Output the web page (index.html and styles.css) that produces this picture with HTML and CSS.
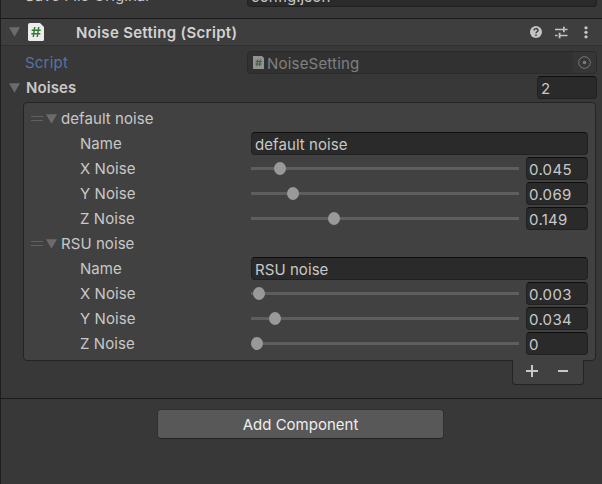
FILE: index.html
```html
<!DOCTYPE html>
<html lang="en">
<head>
<meta charset="utf-8">
<title>Inspector</title>
<link rel="stylesheet" href="styles.css">
</head>
<body>
<main class="inspector">
  <section class="previous">
    <div class="row prop"><span class="label">Save File Original</span><div class="field wide">config.json</div></div>
  </section>

  <header class="header">
    <svg class="arrow" viewBox="0 0 11 10"><path d="M0 .3h11L5.5 9.700z"/></svg>
    <svg class="script-icon" viewBox="0 0 16 18"><path class="page" d="M2 0h10l4 4v12.500a1.500 1.500 0 0 1-1.500 1.500h-13A1.500 1.500 0 0 1 0 16.500V2a2 2 0 0 1 2-2z"/><path class="hash" d="M6.700 4 5.300 14M10.700 4 9.300 14M3.700 7.200h9M3.300 10.800h9"/></svg>
    <h1 class="title">Noise Setting (Script)</h1>
    <div class="tools">
      <svg class="help" viewBox="0 0 12 12"><circle cx="6" cy="6" r="6"/><path d="M4 4.600c0-2.600 4-2.600 4-.2C8 5.800 6 5.700 6 7.300M6 8.600v1.500"/></svg>
      <svg class="preset" viewBox="0 0 13 13"><path d="M0 3.500h8M10 3.500h2.500M0 9.500h2.500M5 9.500h7.500"/><path class="stop" d="M8.900.7v5.600M4.600 6.700v5.600"/></svg>
      <svg class="more" viewBox="0 0 4 13"><circle cx="2" cy="1.800" r="1.650"/><circle cx="2" cy="6.300" r="1.650"/><circle cx="2" cy="10.800" r="1.650"/></svg>
    </div>
  </header>

  <section class="component">
    <div class="row prop">
      <span class="label link">Script</span>
      <div class="field wide object">
        <svg class="mini-icon" viewBox="0 0 11 13"><path class="page" d="M0 0h9l2 2v11H0z"/><path class="hash" d="M4.600 3.500 3.800 10M7.300 3.500 6.500 10M2.500 5.500h6.300M2.300 8h6.300"/></svg>
        <span class="object-name">NoiseSetting</span>
        <span class="picker"><svg viewBox="0 0 13 13"><circle class="ring" cx="6.500" cy="6.500" r="5.800"/><circle class="dot" cx="6.500" cy="6.500" r="1.800"/></svg></span>
      </div>
    </div>
    <div class="row noises">
      <svg class="arrow" viewBox="0 0 11 10"><path d="M0 .3h11L5.5 9.700z"/></svg>
      <span class="label strong">Noises</span>
      <div class="field count">2</div>
    </div>

    <div class="list">
      <div class="row item"><i class="handle"></i><svg class="arrow" viewBox="0 0 11 10"><path d="M0 .3h11L5.5 9.700z"/></svg><span>default noise</span></div>
      <div class="row entry"><span class="label">Name</span><div class="field name">default noise</div></div>
      <div class="row entry"><span class="label">X Noise</span><div class="slider"><i class="knob" style="margin-left:23px"></i></div><div class="field value">0.045</div></div>
      <div class="row entry"><span class="label">Y Noise</span><div class="slider"><i class="knob" style="margin-left:36px"></i></div><div class="field value">0.069</div></div>
      <div class="row entry"><span class="label">Z Noise</span><div class="slider"><i class="knob" style="margin-left:77px"></i></div><div class="field value">0.149</div></div>
      <div class="row item"><i class="handle"></i><svg class="arrow" viewBox="0 0 11 10"><path d="M0 .3h11L5.5 9.700z"/></svg><span>RSU noise</span></div>
      <div class="row entry"><span class="label">Name</span><div class="field name">RSU noise</div></div>
      <div class="row entry"><span class="label">X Noise</span><div class="slider"><i class="knob" style="margin-left:2px"></i></div><div class="field value">0.003</div></div>
      <div class="row entry"><span class="label">Y Noise</span><div class="slider"><i class="knob" style="margin-left:18px"></i></div><div class="field value">0.034</div></div>
      <div class="row entry"><span class="label">Z Noise</span><div class="slider"><i class="knob" style="margin-left:0px"></i></div><div class="field value">0</div></div>
    </div>
    <div class="list-footer">
      <svg viewBox="0 0 12 12"><path d="M0 6h12M6 0v12"/></svg>
      <svg viewBox="0 0 12 12"><path d="M1 6h10"/></svg>
    </div>
  </section>

  <footer class="actions"><button class="add">Add Component</button></footer>
</main>
</body>
</html>
```

FILE: styles.css
```css
* { box-sizing: border-box; }

body {
  margin: 0;
  background: #383838;
  color: #c8c8c8;
  font: 15px/25px Inter, sans-serif;
  letter-spacing: 0.07px;
  overflow: hidden;
}

.inspector {
  display: flex;
  flex-direction: column;
  height: 484px;
  border-left: 1px solid #1e1e1e;
}

svg { display: block; flex: none; }
.row { display: flex; align-items: center; height: 25px; white-space: nowrap; }
.label { flex: none; }

.previous {
  display: flex;
  flex-direction: column;
  justify-content: flex-end;
  height: 19px;
  flex: none;
  padding-bottom: 10px;
  border-bottom: 1px solid #1a1a1a;
}
.previous .row { flex: none; }

.prop { padding: 0 5px 0 24px; }
.prop .label { width: 222px; }

.field {
  flex: none;
  height: 23px;
  padding-left: 3px;
  background: #2a2a2a;
  border: 1px solid #212121;
  border-top-color: #0d0d0d;
  border-radius: 4px;
  line-height: 23px;
}
.wide { width: 350px; }
.count { width: 60px; margin-left: auto; }
.name { width: 337px; }
.value { width: 62px; margin-left: 7px; padding-left: 2px; letter-spacing: 0.3px; }

.arrow { width: 11px; height: 10px; fill: #6b6b6b; }

.header {
  display: flex;
  align-items: center;
  flex: none;
  height: 27px;
  padding: 0 14px 0 8px;
  background: #3e3e3e;
  border-bottom: 1px solid #303030;
}
.script-icon { width: 16px; height: 18px; margin-left: 8px; }
.page { fill: #ececec; }
.hash { fill: none; stroke: #347a38; stroke-width: 1.5; }
.title { margin: 0 0 0 32px; font-size: 15px; font-weight: 600; line-height: 25px; letter-spacing: 0.3px; color: #d2d2d2; }
.tools { display: flex; align-items: center; margin-left: auto; }
.help { width: 12px; height: 12px; fill: #c4c4c4; }
.help path { fill: none; stroke: #3e3e3e; stroke-width: 1.5; }
.preset { width: 13px; height: 13px; margin-left: 13px; fill: none; stroke: #c4c4c4; stroke-width: 1.3; }
.preset .stop { stroke-width: 1.8; }
.more { width: 4px; height: 13px; margin-left: 16px; fill: #c4c4c4; }

.component { display: flex; flex-direction: column; flex: none; height: 352px; padding-top: 4px; }
.link { color: #5573a5; letter-spacing: 0.2px; }
.object { display: flex; align-items: center; padding-left: 5px; background: #313131; border-color: #2a2a2a; color: #808080; }
.object-name { letter-spacing: 0.2px; padding-top: 1px; }
.mini-icon { width: 11px; height: 13px; margin-right: 3px; }
.mini-icon .page { fill: #929292; }
.mini-icon .hash { stroke: #3e6040; stroke-width: 1.2; }
.picker { display: flex; align-items: center; justify-content: center; width: 23px; height: 21px; margin-left: auto; background: #363636; border-radius: 0 3px 3px 0; }
.picker svg { width: 13px; height: 13px; }
.ring { fill: none; stroke: #7b7b7b; }
.dot { fill: #7b7b7b; }
.noises { padding: 0 5px 0 8px; }
.strong { margin-left: 6px; font-weight: 600; letter-spacing: 0.1px; }

.list {
  flex: none;
  height: 259px;
  margin: 2px 6px 0 22px;
  padding-top: 3px;
  background: #414141;
  border: 1px solid #242424;
  border-radius: 4px;
}
.item { padding-left: 7px; }
.handle { width: 12px; height: 5px; margin-right: 3px; border: solid #606060; border-width: 1px 0; }
.item span { margin-left: 4px; }
.entry { padding-left: 56px; }
.entry .label { width: 171px; }
.slider { display: flex; align-items: center; width: 268px; height: 13px; background: linear-gradient(#5e5e5e, #5e5e5e) center / 100% 3px no-repeat; }
.knob { width: 12px; height: 13px; border-radius: 50%; background: #999; }

.list-footer {
  display: flex;
  align-items: center;
  justify-content: space-between;
  align-self: flex-end;
  flex: none;
  width: 72px;
  height: 25px;
  margin: -1px 18px 0 0;
  padding: 0 14px 2px 13px;
  background: #414141;
  border: 1px solid #242424;
  border-top: 0;
  border-radius: 0 0 4px 4px;
}
.list-footer svg { width: 12px; height: 12px; stroke: #c8c8c8; stroke-width: 2; }

.actions { display: flex; justify-content: center; padding: 10px 2px 0 0; border-top: 1px solid #1a1a1a; }
.add {
  width: 287px;
  height: 30px;
  padding: 0;
  background: #585858;
  border: 1px solid #303030;
  border-bottom-color: #242424;
  border-radius: 4px;
  color: #eee;
  font: inherit;
}
```
